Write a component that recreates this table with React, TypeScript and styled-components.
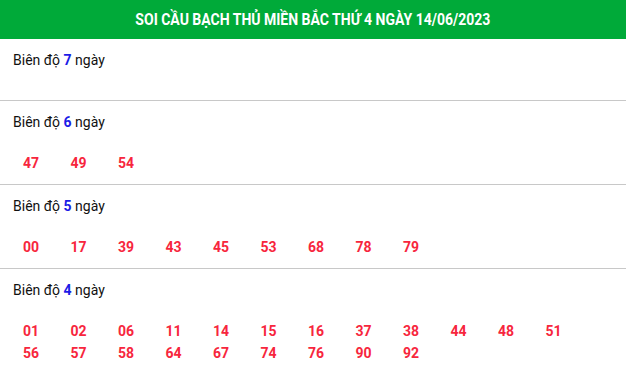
import React from 'react';
import styled, { createGlobalStyle } from 'styled-components';

const GlobalStyle = createGlobalStyle`
	body {
		margin: 0;
		background: #fff;
		font-family: Roboto, 'Liberation Sans', Arial, sans-serif;
	}
`;

const groups: { days: number; numbers: string[] }[] = [
	{ days: 7, numbers: [] },
	{ days: 6, numbers: ['47', '49', '54'] },
	{ days: 5, numbers: ['00', '17', '39', '43', '45', '53', '68', '78', '79'] },
	{
		days: 4,
		numbers: [
			'01', '02', '06', '11', '14', '15', '16', '37', '38', '44', '48', '51',
			'56', '57', '58', '64', '67', '74', '76', '90', '92',
		],
	},
];

const App = () => {
	return (
		<>
			<GlobalStyle />
			<Wrapper>
				<Header>
					<Title>SOI CẦU BẠCH THỦ MIỀN BẮC THỨ 4 NGÀY 14/06/2023</Title>
				</Header>
				{groups.map((g) => (
					<Section key={g.days}>
						<Label>
							Biên độ <Days>{g.days}</Days> ngày
						</Label>
						<Numbers>
							{g.numbers.map((n) => (
								<Num key={n}>{n}</Num>
							))}
						</Numbers>
					</Section>
				))}
			</Wrapper>
		</>
	);
};

const Wrapper = styled.div`
	width: 626px;
`;

const Header = styled.div`
	height: 39px;
	background-color: #00aa39;
	display: flex;
	justify-content: center;
	align-items: center;
`;

const Title = styled.h2`
	margin: 0;
	color: #fff;
	font-size: 16px;
	font-weight: 700;
	white-space: nowrap;
	transform: scaleX(0.875);
`;

const Section = styled.div`
	padding: 11px 0 10px;
	border-bottom: 1px solid #c8c8c8;

	&:first-of-type {
		padding-bottom: 9px;
	}

	&:last-child {
		border-bottom: none;
	}
`;

const Label = styled.div`
	padding-left: 13px;
	font-size: 14px;
	line-height: 20px;
	color: #111;
`;

const Days = styled.b`
	color: #1c1ce6;
`;

const Numbers = styled.div`
	display: grid;
	grid-template-columns: repeat(12, 47.5px);
	padding: 20px 0 0 23px;
`;

const Num = styled.span`
	font-size: 14px;
	font-weight: 700;
	line-height: 22px;
	color: #f7263d;
`;

export default App;
